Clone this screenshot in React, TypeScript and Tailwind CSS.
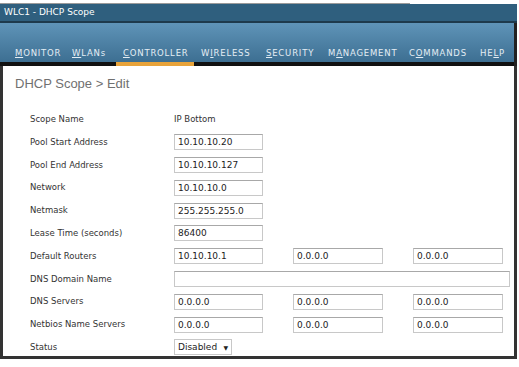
import React from 'react';

// widths measured from item start to next item start
const navItems = [
	{ label: 'MONITOR', u: 'M', w: 'w-[57px]' },
	{ label: 'WLANs', u: 'W', w: 'w-[51px]' },
	{ label: 'CONTROLLER', u: 'C', w: 'w-[78px]' },
	{ label: 'WIRELESS', u: 'I', w: 'w-[65px]' },
	{ label: 'SECURITY', u: 'S', w: 'w-[62px]' },
	{ label: 'MANAGEMENT', u: 'A', w: 'w-[81px]' },
	{ label: 'COMMANDS', u: 'O', w: 'w-[71px]' },
	{ label: 'HELP', u: 'L', w: 'w-[30px]' },
];

type Row = {
	label: string;
	values?: string[];
	text?: string;
	wide?: boolean;
	select?: string;
};

const rows: Row[] = [
	{ label: 'Scope Name', text: 'IP Bottom' },
	{ label: 'Pool Start Address', values: ['10.10.10.20'] },
	{ label: 'Pool End Address', values: ['10.10.10.127'] },
	{ label: 'Network', values: ['10.10.10.0'] },
	{ label: 'Netmask', values: ['255.255.255.0'] },
	{ label: 'Lease Time (seconds)', values: ['86400'] },
	{ label: 'Default Routers', values: ['10.10.10.1', '0.0.0.0', '0.0.0.0'] },
	{ label: 'DNS Domain Name', wide: true },
	{ label: 'DNS Servers', values: ['0.0.0.0', '0.0.0.0', '0.0.0.0'] },
	{ label: 'Netbios Name Servers', values: ['0.0.0.0', '0.0.0.0', '0.0.0.0'] },
	{ label: 'Status', select: 'Disabled' },
];

function NavLabel({ label, u }: { label: string; u: string }) {
	const i = label.indexOf(u);
	return (
		<span>
			{label.slice(0, i)}
			<span className="underline underline-offset-1">{label[i]}</span>
			{label.slice(i + 1)}
		</span>
	);
}

function Field({ value, className }: { value?: string; className: string }) {
	return (
		<div
			className={`h-[16px] border border-[#c8c8c8] border-t-[#a8a8a8] bg-white px-[3px] text-[9px] leading-[14px] text-[#222] ${className}`}
		>
			{value}
		</div>
	);
}

export default function App() {
	return (
		<div
			className="relative h-[367px] w-[519px] overflow-hidden bg-white"
			style={{ fontFamily: '"DejaVu Sans", Verdana, sans-serif' }}
		>
			<div className="mt-[3px] h-px w-[410px] bg-[#9a9a9a]" />
			<div className="mr-[2px] flex flex-col">
				<div className="flex h-[17px] items-center bg-[#2f5f7e] pl-[4px] text-[9px] text-white">
					WLC1 - DHCP Scope
				</div>
				<div className="h-[2px] bg-[#1e3a4c]" />
				<div className="flex flex-col border-r-[3px] border-[#222]">
					<div className="flex h-[39px] items-end whitespace-nowrap bg-gradient-to-b from-[#5f94b8] to-[#3d6f92] pb-[2px] pl-[15px] text-[8.5px] tracking-[0.8px] text-[#e4edf4]">
						{navItems.map((n) => (
							<div key={n.label} className={`shrink-0 ${n.w}`}>
								<NavLabel label={n.label} u={n.u} />
							</div>
						))}
					</div>
					<div className="flex h-[4px] bg-[#111]">
						<div className="ml-[116px] w-[78px] bg-[#e8a33a]" />
					</div>
				</div>
				<div className="flex h-[293px] flex-col border-x-[3px] border-b-[3px] border-[#333] bg-white">
					<div
						className="ml-[12px] mt-[10px] h-[16px] text-[13px] leading-[16px] text-[#707070]"
						style={{ fontFamily: '"Liberation Sans", Arial, sans-serif' }}
					>
						DHCP Scope &gt; Edit
					</div>
					<div className="mt-[16px] flex flex-col">
						{rows.map((r) => (
							<div key={r.label} className="flex h-[22.8px] items-center">
								<div className="ml-[27px] w-[144px] text-[8.5px] text-[#333]">{r.label}</div>
								{r.text && <div className="text-[8.5px] text-[#333]">{r.text}</div>}
								{r.values && (
									<div className="flex">
										{r.values.map((v, i) => (
											<Field key={i} value={v} className={i === 0 ? 'w-[89px]' : 'ml-[30px] w-[90px]'} />
										))}
									</div>
								)}
								{r.wide && <Field className="w-[336px]" />}
								{r.select && (
									<div className="flex h-[16px] w-[58px] items-center justify-between border border-[#c8c8c8] bg-white px-[3px] text-[9px] text-[#222]">
										<span>{r.select}</span>
										<span className="text-[6px]">▼</span>
									</div>
								)}
							</div>
						))}
					</div>
				</div>
			</div>
		</div>
	);
}
